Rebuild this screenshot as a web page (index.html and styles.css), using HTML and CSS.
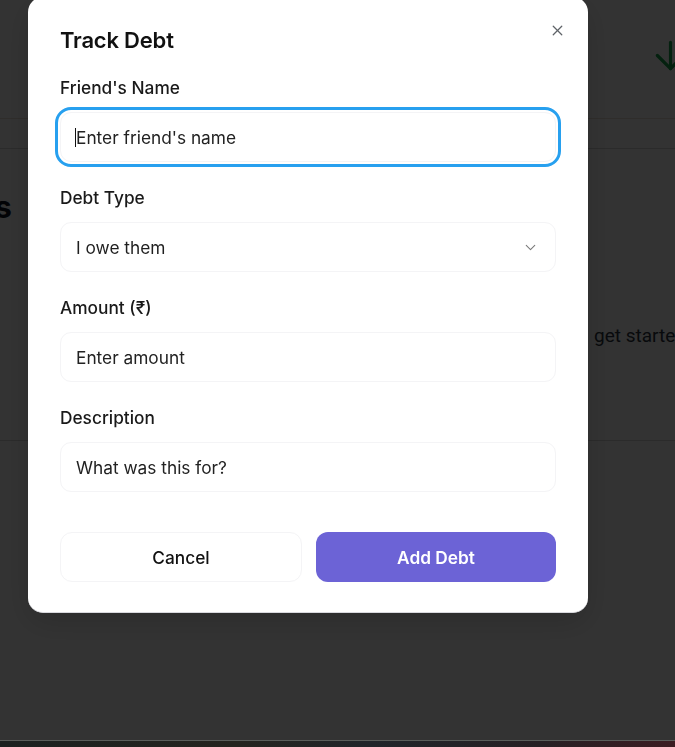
FILE: index.html
```html
<!DOCTYPE html>
<html lang="en">
<head>
<meta charset="utf-8">
<title>Track Debt</title>
<link rel="stylesheet" href="styles.css">
</head>
<body>
<div class="page">
  <header class="page-header">
    <svg class="header-arrow" viewBox="0 0 24 24" width="45" height="45" fill="none" stroke="currentColor" stroke-width="1.7" stroke-linecap="round" stroke-linejoin="round"><path d="M12 5v14"/><path d="M19 12l-7 7-7-7"/></svg>
  </header>
  <nav class="page-tabs"></nav>
  <section class="page-card">
    <h2 class="page-title">Debts</h2>
    <p class="empty-text">get started</p>
  </section>
</div>

<div class="overlay"></div>

<div class="modal" role="dialog" aria-labelledby="modal-title">
  <button class="close-btn" type="button" aria-label="Close">
    <svg viewBox="0 0 24 24" width="17" height="17" fill="none" stroke="currentColor" stroke-width="1.8" stroke-linecap="round"><path d="M18 6L6 18"/><path d="M6 6l12 12"/></svg>
  </button>
  <h1 class="modal-title" id="modal-title">Track Debt</h1>

  <div class="field">
    <label class="field-label" for="friend">Friend's Name</label>
    <div class="control-wrap">
      <input class="control is-focused" id="friend" type="text" placeholder="Enter friend's name">
      <span class="caret"></span>
    </div>
  </div>

  <div class="field">
    <label class="field-label" for="type">Debt Type</label>
    <div class="control-wrap">
      <select class="control select" id="type">
        <option>I owe them</option>
        <option>They owe me</option>
      </select>
      <svg class="chevron" viewBox="0 0 24 24" width="17" height="17" fill="none" stroke="currentColor" stroke-width="1.5" stroke-linecap="round" stroke-linejoin="round"><path d="M6 9l6 6 6-6"/></svg>
    </div>
  </div>

  <div class="field">
    <label class="field-label" for="amount">Amount (₹)</label>
    <div class="control-wrap">
      <input class="control" id="amount" type="text" placeholder="Enter amount">
    </div>
  </div>

  <div class="field">
    <label class="field-label" for="desc">Description</label>
    <div class="control-wrap">
      <input class="control" id="desc" type="text" placeholder="What was this for?">
    </div>
  </div>

  <div class="actions">
    <button class="btn btn-cancel" type="button">Cancel</button>
    <button class="btn btn-primary" type="button">Add Debt</button>
  </div>
</div>

<div class="taskbar"></div>
</body>
</html>
```

FILE: styles.css
```css
* { box-sizing: border-box; }

html, body {
  margin: 0;
  height: 100%;
  overflow: hidden;
}

body {
  background: #ffffff;
  font-family: Inter, "Noto Sans", "Liberation Sans", sans-serif;
  color: #111827;
}

/* background page */
.page {
  width: 100%;
}

.page-header {
  height: 119px;
  border-bottom: 1px solid #eadfd6;
  display: flex;
  justify-content: flex-end;
  align-items: flex-start;
  padding-top: 33px;
}

.header-arrow {
  color: #16a34a;
  margin-right: -18px;
  flex-shrink: 0;
}

.page-tabs {
  height: 30px;
  border-bottom: 1px solid #d4d4d4;
}

.page-card {
  height: 292px;
  border-bottom: 1px solid #d6d6d6;
  padding-top: 38px;
}

.page-title {
  margin: 0 0 0 -77px;
  font-size: 31px;
  font-weight: 700;
  line-height: 40px;
  color: #0b1220;
}

.empty-text {
  margin: 96px 0 0 594px;
  white-space: nowrap;
  font-size: 19px;
  line-height: 26px;
  color: #2c3440;
  font-family: Roboto, "Liberation Sans", sans-serif;
}

.overlay {
  position: fixed;
  inset: 0;
  background: rgba(0, 0, 0, 0.8);
}

.taskbar {
  position: fixed;
  left: 0;
  right: 0;
  bottom: 0;
  height: 7px;
  border-top: 1px solid #5a5e5b;
  background: linear-gradient(90deg, #1b2120 0%, #24241f 35%, #20252a 55%, #262024 80%, #3c1c22 100%);
}

/* modal */
.modal {
  position: fixed;
  left: 28px;
  top: -3px;
  width: 560px;
  background: #ffffff;
  border-radius: 15px;
  border-bottom: 1px solid #d9d9de;
  box-shadow: 0 10px 30px rgba(0, 0, 0, 0.15);
  padding: 29px 32px 30px 32px;
}

.close-btn {
  position: absolute;
  top: 25px;
  right: 22px;
  width: 17px;
  height: 17px;
  padding: 0;
  border: 0;
  background: none;
  color: #5f6368;
  display: flex;
  cursor: pointer;
}

.modal-title {
  margin: 0 0 22px 0;
  font-size: 22px;
  line-height: 28px;
  font-weight: 600;
  color: #111111;
  letter-spacing: -0.2px;
}

.field {
  margin-bottom: 24px;
}

.field-label {
  display: block;
  font-size: 17.3px;
  line-height: 24px;
  font-weight: 500;
  color: #1a1a1a;
  margin-bottom: 12px;
}

.control-wrap {
  position: relative;
}

.control {
  display: block;
  width: 100%;
  height: 50px;
  border: 1px solid #f4f4f6;
  border-radius: 11px;
  background: #ffffff;
  padding: 0 15px;
  font-family: inherit;
  font-size: 17.3px;
  color: #1f1f1f;
  outline: none;
  appearance: none;
  -webkit-appearance: none;
}

.control::placeholder {
  color: #222222;
  opacity: 1;
}

.control.is-focused {
  outline: 3px solid #27a0ef;
  outline-offset: 2px;
}

.caret {
  position: absolute;
  left: 15px;
  top: 16px;
  width: 1px;
  height: 19px;
  background: #111111;
}

.select {
  padding-right: 40px;
}

.chevron {
  position: absolute;
  right: 17px;
  top: 17px;
  color: #7a7a7a;
  pointer-events: none;
}

.actions {
  display: grid;
  grid-template-columns: 242px 240px;
  justify-content: space-between;
  margin-top: 40px;
}

.btn {
  height: 50px;
  border-radius: 12px;
  font-family: inherit;
  font-size: 17.3px;
  cursor: pointer;
}

.btn-cancel {
  background: #ffffff;
  border: 1px solid #f4f4f6;
  color: #111111;
  font-weight: 500;
}

.btn-primary {
  background: #6c63d6;
  border: 0;
  color: #ffffff;
  font-weight: 600;
}
```
